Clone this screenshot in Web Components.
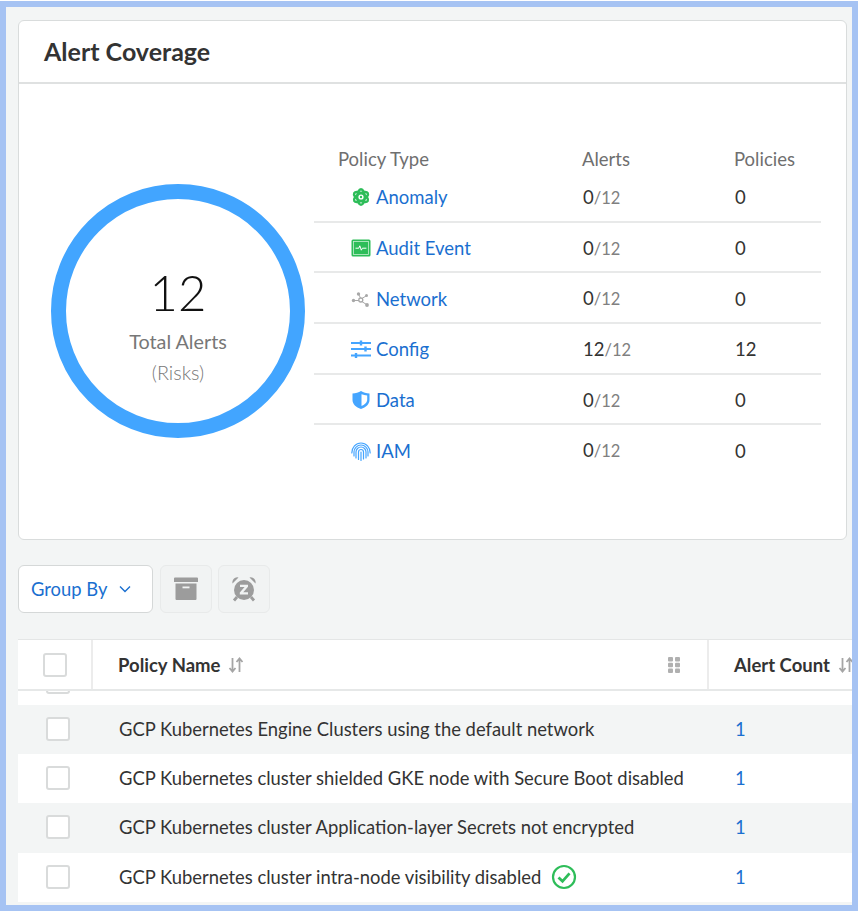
<!DOCTYPE html>
<html lang="en">
<head>
<meta charset="utf-8">
<title>Alert Coverage</title>
<style>
  html, body { margin: 0; background: #fff; }
  body { font-family: Lato, "Open Sans", sans-serif; color: #333; }
</style>
</head>
<body>
<alert-frame>
  <coverage-card heading="Alert Coverage">
    <total-donut total="12"></total-donut>
    <coverage-table>
      <coverage-row icon="anomaly" name="Anomaly" alerts="0" policies="0"></coverage-row>
      <coverage-row icon="audit" name="Audit Event" alerts="0" policies="0"></coverage-row>
      <coverage-row icon="network" name="Network" alerts="0" policies="0"></coverage-row>
      <coverage-row icon="config" name="Config" alerts="12" policies="12"></coverage-row>
      <coverage-row icon="data" name="Data" alerts="0" policies="0"></coverage-row>
      <coverage-row icon="iam" name="IAM" alerts="0" policies="0" last></coverage-row>
    </coverage-table>
  </coverage-card>
  <alert-toolbar></alert-toolbar>
  <alert-table>
    <alert-row clipped></alert-row>
    <alert-row shaded name="GCP Kubernetes Engine Clusters using the default network"></alert-row>
    <alert-row name="GCP Kubernetes cluster shielded GKE node with Secure Boot disabled"></alert-row>
    <alert-row shaded name="GCP Kubernetes cluster Application-layer Secrets not encrypted"></alert-row>
    <alert-row resolved name="GCP Kubernetes cluster intra-node visibility disabled"></alert-row>
  </alert-table>
</alert-frame>
<script>
  const icons = {
    anomaly: `<svg viewBox="0 0 20 20" width="20" height="20"><g fill="none" stroke="#2ebd59" stroke-width="2.400"><ellipse cx="10" cy="10" rx="3.600" ry="7.800"/><ellipse cx="10" cy="10" rx="3.600" ry="7.800" transform="rotate(60 10 10)"/><ellipse cx="10" cy="10" rx="3.600" ry="7.800" transform="rotate(-60 10 10)"/></g><circle cx="10" cy="10" r="4.200" fill="#2ebd59"/><circle cx="10" cy="10" r="2.600" fill="#fff"/><circle cx="10" cy="10" r="1.200" fill="#2ebd59"/></svg>`,
    audit: `<svg viewBox="0 0 20 20" width="20" height="20"><rect x=".5" y="1.500" width="19" height="17" rx="1.500" fill="#2ebd59"/><rect x="2.500" y="3.500" width="15" height="13" fill="none" stroke="#c5eed2" stroke-width=".8"/><path d="M4.500 10.200h3.300l1-2.400 1.500 4.400 1.100-2h4" fill="none" stroke="#fff" stroke-width="1"/></svg>`,
    network: `<svg viewBox="0 0 20 20" width="20" height="20"><g stroke="#a8a8a8" stroke-width="1" fill="none"><path d="M3 11.500h5M8 6l2 4M10 10l5-3M10 12l5.500 3.500"/></g><g fill="#a8a8a8"><circle cx="2.500" cy="11.500" r="1.700"/><circle cx="7.500" cy="5" r="1.700"/><circle cx="15.500" cy="6.500" r="1.500"/><circle cx="16" cy="16" r="1.900"/></g><circle cx="9.800" cy="11" r="2" fill="#fff" stroke="#a8a8a8" stroke-width="1.300"/></svg>`,
    config: `<svg viewBox="0 0 20 20" width="20" height="20"><g stroke="#45a5ff" stroke-width="2" fill="none"><path d="M0 4h20M0 10h20M0 16.500h20"/></g><g stroke="#45a5ff" stroke-width="2.400" fill="none"><path d="M10 1.500v5M14.500 7.500v5M5 14v5"/></g></svg>`,
    data: `<svg viewBox="0 0 20 20" width="20" height="20"><path d="M10 1c2.500 1.500 5.200 2.200 8.500 2.400v6.500c0 4-3.500 7.300-8.500 9.100-5-1.800-8.500-5.100-8.500-9.100V3.400C4.800 3.200 7.500 2.500 10 1z" fill="#45a5ff"/><path d="M10.500 4.200v11.900c2.800-1.400 5.700-3.400 5.700-6.300V5.500c-2-.2-3.900-.6-5.700-1.300z" fill="#fff"/></svg>`,
    iam: `<svg viewBox="0 0 20 20" width="20" height="20"><g fill="none" stroke="#45a5ff" stroke-width="1.200" stroke-linecap="round"><path d="M.8 12c0-5.500 4-10 9.200-10s9.200 4.500 9.200 10"/><path d="M3 15v-4a7 7 0 0 1 14 0v4"/><path d="M5 17v-6a5 5 0 0 1 10 0v6"/><path d="M7.500 18.500V11a2.500 2.500 0 0 1 5 0v7"/><path d="M10 19.500V11"/></g></svg>`
  }

  /**
   * Builds an element class from a static markup and style string.
   *
   * @param {string} html - The markup for the shadow root.
   * @returns {HTMLElement} The base class.
   */
  const shadowed = (html) => {
    const template = document.createElement('template')
    template.innerHTML = html
    return class extends HTMLElement {
      constructor () {
        super()
        this.attachShadow({ mode: 'open' })
          .appendChild(template.content.cloneNode(true))
      }
    }
  }

  customElements.define('alert-frame', shadowed(`
    <style>
      :host { display: block; box-sizing: border-box; width: 858px; height: 910px; margin-top: 1px;
        border: 6px solid #a6c3f3; background: #f3f5f5; overflow: hidden;
        padding: 13px 0 0 12px; }
    </style>
    <slot></slot>
  `))

  customElements.define('coverage-card', class extends shadowed(`
    <style>
      :host { display: block; width: 829px; height: 520px; box-sizing: border-box; background: #fff;
        border: 1px solid #d9dcdc; border-radius: 6px; }
      h2 { margin: 0; height: 63px; box-sizing: border-box; padding: 0 0 0 25px; border-bottom: 2px solid #dfe1e1;
        font: 700 25px/60px Lato, sans-serif; color: #333; }
      .body { display: flex; align-items: flex-start; padding: 100px 0 0 32px; }
    </style>
    <h2></h2>
    <div class="body"><slot></slot></div>
  `) {
    connectedCallback () {
      this.shadowRoot.querySelector('h2').textContent = this.getAttribute('heading')
    }
  })

  customElements.define('total-donut', class extends shadowed(`
    <style>
      :host { display: flex; flex-direction: column; align-items: center; flex: none; box-sizing: border-box;
        width: 254px; height: 254px; border: 15px solid #42a5ff; border-radius: 50%; text-align: center; }
      .total { font: 300 49px/60px Lato, sans-serif; color: #111; margin-top: 63px; }
      .label { font: 400 19.800px/24px Lato, sans-serif; color: #777; margin-top: 7px; }
      .sub { font: 300 19.800px/24px Lato, sans-serif; color: #777; margin-top: 7px; }
    </style>
    <div class="total"></div>
    <div class="label">Total Alerts</div>
    <div class="sub">(Risks)</div>
  `) {
    connectedCallback () {
      this.shadowRoot.querySelector('.total').textContent = this.getAttribute('total')
    }
  })

  customElements.define('coverage-table', shadowed(`
    <style>
      :host { display: block; width: 507px; margin: -37px 0 0 9px; font: 400 18.500px/24px Lato, sans-serif; }
      .head { display: grid; grid-template-columns: 268px 152px 1fr; height: 25px; padding-left: 0; color: #6f6f6f; }
      .head span:first-child { padding-left: 24px; }
    </style>
    <div class="head"><span>Policy Type</span><span>Alerts</span><span>Policies</span></div>
    <slot></slot>
  `))

  customElements.define('coverage-row', class extends shadowed(`
    <style>
      :host { display: grid; grid-template-columns: 269px 152px 1fr; align-items: center; box-sizing: border-box;
        height: 50.700px; padding-top: 2px; border-bottom: 2px solid #e8e9e9; font: 400 18.500px/24px Lato, sans-serif; }
      :host([last]) { border-bottom-color: transparent; }
      .name { display: flex; align-items: center; gap: 5px; padding-left: 37px; color: #1a6fd0; }
      svg { display: block; }
      .icon { display: block; width: 20px; height: 20px; }
      .num { color: #333; }
      .of { color: #808080; font-size: 16.500px; }
    </style>
    <div class="name"><span class="icon"></span><span class="label"></span></div>
    <div><span class="num alerts"></span><span class="of">/12</span></div>
    <div class="num policies"></div>
  `) {
    connectedCallback () {
      this.shadowRoot.querySelector('.icon').innerHTML = icons[this.getAttribute('icon')]
      this.shadowRoot.querySelector('.label').textContent = this.getAttribute('name')
      this.shadowRoot.querySelector('.alerts').textContent = this.getAttribute('alerts')
      this.shadowRoot.querySelector('.policies').textContent = this.getAttribute('policies')
    }
  })

  customElements.define('alert-toolbar', shadowed(`
    <style>
      :host { display: flex; gap: 7px; margin-top: 25px; height: 48px; }
      .group { display: flex; align-items: center; gap: 11px; box-sizing: border-box; width: 135px; padding-left: 12px;
        background: #fff; border: 1px solid #d5d8d8; border-radius: 6px; color: #1a6fd0; font: 400 18.400px/24px Lato, sans-serif; }
      .tool { display: flex; align-items: center; justify-content: center; box-sizing: border-box; width: 52px;
        background: #f1f3f3; border: 1px solid #e8eaea; border-radius: 6px; }
      .tool + .tool { margin-left: -1px; }
      svg { display: block; }
    </style>
    <div class="group">Group By
      <svg width="14" height="14" viewBox="0 0 14 14"><path d="M2 4.500l5 5 5-5" fill="none" stroke="#1a6fd0" stroke-width="1.400"/></svg>
    </div>
    <div class="tool">
      <svg width="26" height="24" viewBox="0 0 26 24"><path fill="#9c9c9c" d="M1 1.500a1 1 0 0 1 1-1h22a1 1 0 0 1 1 1v3.500h-24zM2.500 6.500h21v15.500a1 1 0 0 1-1 1h-19a1 1 0 0 1-1-1z"/><rect x="9.500" y="9.500" width="7" height="1.800" fill="#f1f3f3"/></svg>
    </div>
    <div class="tool">
      <svg width="26" height="26" viewBox="0 0 26 26"><circle cx="13" cy="14" r="10" fill="#9c9c9c"/><path d="M1.500 7.500a5 5 0 0 1 6-6zM24.500 7.500a5 5 0 0 0-6-6z" fill="#9c9c9c"/><path d="M6 21l-3 3.500M20 21l3 3.500" stroke="#9c9c9c" stroke-width="2.800" fill="none"/><path d="M9 8.800h8v2l-4.800 5.400h4.800v2.200h-8.200v-2l4.800-5.400H9z" fill="#f1f3f3"/></svg>
    </div>
  `))

  customElements.define('check-box', shadowed(`
    <style>
      :host { display: block; box-sizing: border-box; width: 24px; height: 24px; background: #fff;
        border: 2px solid #d9dbdb; border-radius: 3px; }
    </style>
  `))

  customElements.define('alert-table', shadowed(`
    <style>
      :host { display: block; width: 834px; margin-top: 26px; overflow: hidden; background: #fff;
        border-top: 1px solid #e4e6e6; }
      .head { display: grid; grid-template-columns: 75px 616px 200px; height: 49px; border-bottom: 2px solid #e6e8e8;
        font: 700 18.500px/24px Lato, sans-serif; color: #333; }
      .cell { display: flex; align-items: center; box-sizing: border-box; border-right: 2px solid #ececec; }
      .check { justify-content: center; padding-left: 1px; }
      .name { padding: 0 27px 0 25px; }
      .count { padding-left: 25px; border-right: 0; white-space: nowrap; }
      .sort { margin-left: 8px; display: block; flex: none; }
      .drag { margin-left: auto; display: block; }
    </style>
    <div class="head">
      <div class="cell check"><check-box></check-box></div>
      <div class="cell name">Policy Name
        <svg class="sort" width="16" height="16" viewBox="0 0 16 16"><path d="M4.500 1v13M1.500 11l3 3.500 3-3.500M11.500 15V2M8.500 5l3-3.500 3 3.500" fill="none" stroke="#a5a5a5" stroke-width="1.800"/></svg>
        <svg class="drag" width="12" height="16" viewBox="0 0 12 16"><g fill="#b0b0b0"><rect x="0" y="0" width="5" height="4.500" rx="1"/><rect x="7" y="0" width="5" height="4.500" rx="1"/><rect x="0" y="5.800" width="5" height="4.500" rx="1"/><rect x="7" y="5.800" width="5" height="4.500" rx="1"/><rect x="0" y="11.500" width="5" height="4.500" rx="1"/><rect x="7" y="11.500" width="5" height="4.500" rx="1"/></g></svg>
      </div>
      <div class="cell count">Alert Count
        <svg class="sort" width="16" height="16" viewBox="0 0 16 16"><path d="M4.500 1v13M1.500 11l3 3.500 3-3.500M11.500 15V2M8.500 5l3-3.500 3 3.500" fill="none" stroke="#a5a5a5" stroke-width="1.800"/></svg>
      </div>
    </div>
    <slot></slot>
  `))

  customElements.define('alert-row', class extends shadowed(`
    <style>
      :host { display: grid; grid-template-columns: 74px 616px 144px; align-items: center; height: 49.200px; background: #fff;
        font: 400 18.400px/24px Lato, sans-serif; color: #333; }
      :host([shaded]) { background: #f3f5f5; }
      :host([clipped]) { height: 14px; overflow: hidden; align-items: start; }
      :host([clipped]) check-box { margin-top: -21px; }
      check-box { margin: -1px 0 0 28px; }
      .name { display: flex; align-items: center; gap: 10px; padding-left: 27px; margin-top: -1px; }
      .count { padding-left: 27px; color: #1a6fd0; margin-top: -1px; }
      svg { display: none; flex: none; }
      :host([resolved]) svg { display: block; }
      :host([clipped]) .name, :host([clipped]) .count { display: none; }
    </style>
    <check-box></check-box>
    <div class="name"><span class="text"></span>
      <svg width="26" height="26" viewBox="0 0 26 26"><circle cx="13" cy="13" r="11" fill="none" stroke="#2ebd59" stroke-width="2.200"/><path d="M7.500 13.500l4 3.800 7-8" fill="none" stroke="#2ebd59" stroke-width="2.800"/></svg>
    </div>
    <div class="count">1</div>
  `) {
    connectedCallback () {
      this.shadowRoot.querySelector('.text').textContent = this.getAttribute('name')
    }
  })
</script>
</body>
</html>
